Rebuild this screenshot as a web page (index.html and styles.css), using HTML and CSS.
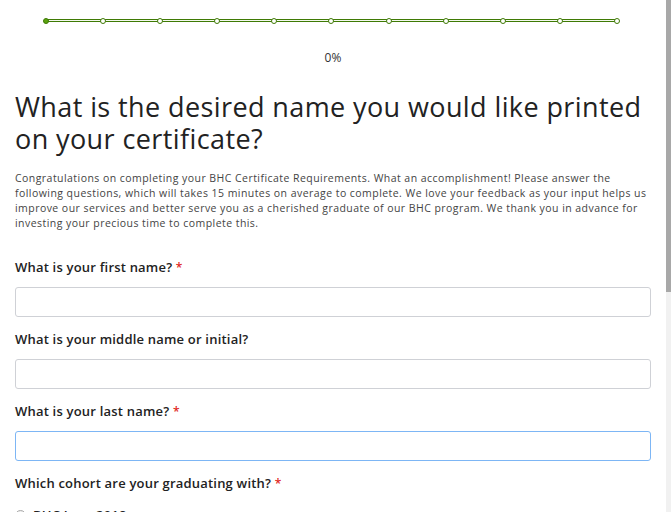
FILE: index.html
```html
<!DOCTYPE html>
<html>
<head>
<meta charset="utf-8">
<link rel="stylesheet" href="styles.css">
</head>
<body>
<div class="page">
  <div class="progress">
    <div class="track">
      <span class="node done"></span>
      <span class="node"></span>
      <span class="node"></span>
      <span class="node"></span>
      <span class="node"></span>
      <span class="node"></span>
      <span class="node"></span>
      <span class="node"></span>
      <span class="node"></span>
      <span class="node"></span>
      <span class="node"></span>
    </div>
    <div class="pct">0%</div>
  </div>
  <h1 class="title">What is the desired name you would like printed on your certificate?</h1>
  <p class="intro">Congratulations on completing your BHC Certificate Requirements. What an accomplishment! Please answer the following questions, which will takes 15 minutes on average to complete. We love your feedback as your input helps us improve our services and better serve you as a cherished graduate of our BHC program. We thank you in advance for investing your precious time to complete this.</p>
  <div class="field">
    <label class="label">What is your first name? <span class="req">*</span></label>
    <input class="input" type="text">
  </div>
  <div class="field">
    <label class="label">What is your middle name or initial?</label>
    <input class="input" type="text">
  </div>
  <div class="field">
    <label class="label">What is your last name? <span class="req">*</span></label>
    <input class="input focused" type="text">
  </div>
  <div class="field">
    <label class="label">Which cohort are your graduating with? <span class="req">*</span></label>
    <div class="option"><span class="radio"></span><span class="opt-text">BHC June 2018</span></div>
  </div>
</div>
<div class="scrollbar"><div class="thumb"></div></div>
</body>
</html>
```
FILE: styles.css
```css
html, body {
  margin: 0;
  padding: 0;
  background: #fff;
  overflow: hidden;
}
body {
  font-family: "Open Sans", "Lato", sans-serif;
  color: #222;
}
.page {
  padding: 0 20px 0 15px;
  width: 636px;
}
.progress {
  padding-top: 19px;
}
.track {
  margin: 0 34px 0 31px;
  height: 1px;
  border-top: 1px solid #3f7a05;
  border-bottom: 1px solid #3f7a05;
  background: #f4f9ee;
  display: flex;
  justify-content: space-between;
  align-items: center;
}
.node {
  flex: none;
  width: 4px;
  height: 4px;
  border-radius: 50%;
  border: 1px solid #3f7a05;
  background: #fff;
  margin: 0 -3px;
}
.node.done {
  background: #5aa20f;
}
.pct {
  text-align: center;
  font-size: 12px;
  line-height: 16px;
  color: #333;
  margin-top: 28px;
  padding-left: 0;
}
.title {
  font-weight: 400;
  font-size: 27px;
  line-height: 32px;
  letter-spacing: 0.4px;
  margin: 25px -10px 0 0;
  color: #222;
}
.intro {
  font-size: 10.5px;
  line-height: 15px;
  letter-spacing: 0.45px;
  color: #444;
  margin: 16px 0 0 0;
}
.field {
  margin-top: 29px;
}
.field + .field {
  margin-top: 15px;
}
.label {
  display: block;
  font-weight: 600;
  font-size: 13px;
  line-height: 15px;
  letter-spacing: 0.2px;
  color: #222;
}
.req {
  color: #e0261b;
  font-size: 12px;
}
.input {
  display: block;
  box-sizing: border-box;
  width: 636px;
  height: 30px;
  margin-top: 12px;
  border: 1px solid #cfd1d6;
  border-radius: 3px;
  padding: 0 8px;
  font: inherit;
  outline: none;
}
.input.focused {
  border-color: #7db6f5;
}
.option {
  display: flex;
  align-items: center;
  margin-top: 15px;
  font-size: 13px;
  font-weight: 600;
  letter-spacing: 0.2px;
}
.radio {
  width: 9px;
  height: 9px;
  border-radius: 50%;
  border: 1px solid #aaa;
  background: #eee;
  margin-right: 7px;
}
.scrollbar {
  position: fixed;
  top: 0;
  right: 0;
  width: 5px;
  height: 512px;
  background: #f1f1f1;
}
.thumb {
  height: 292px;
  background: #a8a8a8;
}
```
